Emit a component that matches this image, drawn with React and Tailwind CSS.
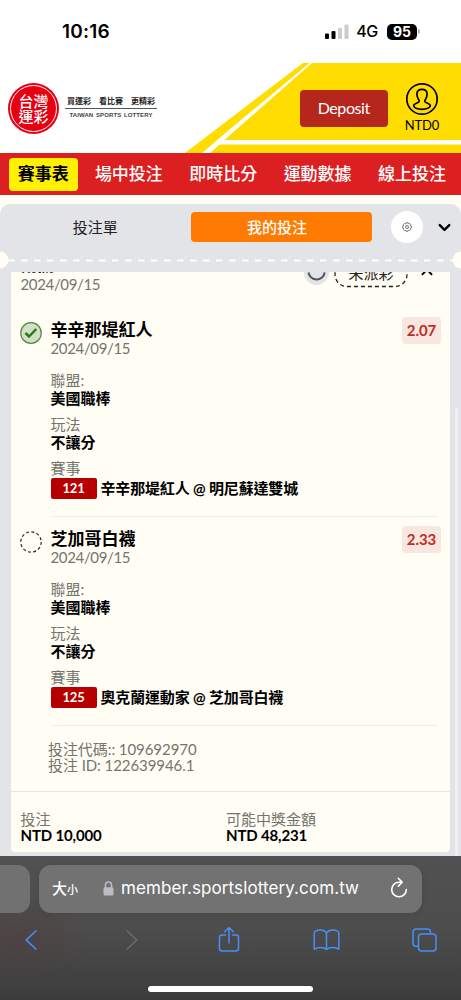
import React from 'react';
import { ChevronDown, ChevronUp } from 'lucide-react';

const NAV_ITEMS = ['賽事表', '場中投注', '即時比分', '運動數據', '線上投注'];

const BETS = [
    { team: '辛辛那堤紅人', date: '2024/09/15', odds: '2.07', league: '美國職棒', market: '不讓分', code: '121', match: '辛辛那堤紅人 @ 明尼蘇達雙城', won: true },
    { team: '芝加哥白襪', date: '2024/09/15', odds: '2.33', league: '美國職棒', market: '不讓分', code: '125', match: '奧克蘭運動家 @ 芝加哥白襪', won: false },
];

function StatusBar() {
    return (
        <div className="flex h-[63px] shrink-0 items-start justify-between bg-white pt-[21px] pr-[41px] pl-[62px] font-['Inter','Liberation_Sans',sans-serif] text-black">
            <span className="text-[19px] leading-[21px] font-semibold tracking-[0.2px]">10:16</span>
            <div className="flex h-[21px] items-center">
                <svg width="24" height="16" viewBox="0 0 24 16" className="mr-[7px]">
                    <rect x="0" y="9.5" width="4" height="5.5" rx="1" fill="#000" />
                    <rect x="6.5" y="7" width="4" height="8" rx="1" fill="#000" />
                    <rect x="13" y="4" width="4" height="11" rx="1" fill="#ccc" />
                    <rect x="19.5" y="0.5" width="4" height="14.5" rx="1" fill="#ccc" />
                </svg>
                <span className="mr-[9px] text-[16px] leading-[21px] font-medium tracking-[-0.3px]">4G</span>
                <span className="flex h-4 w-[30px] items-center justify-center rounded-[5px] bg-black text-[14px] font-bold text-white">95</span>
                <span className="ml-px h-[5px] w-[2px] rounded-r-full bg-[#b5b5b5]" />
            </div>
        </div>
    );
}

function Header() {
    return (
        <header className="relative h-[90px] shrink-0 bg-white">
            {/* Faixa amarela diagonal */}
            <svg className="absolute inset-0" width="461" height="90" viewBox="0 0 461 90">
                <polygon points="303,0 461,0 461,90 185,90" fill="#fd0" />
                <polygon points="309.5,0 312,0 230,72 210,90 202,90 229,67" fill="#fff" />
                <polygon points="224,77 461,77 461,81.5 218,81.5" fill="#fff" />
            </svg>
            <div className="relative flex h-full items-start pl-2">
                <div className="mt-5 flex size-[51px] items-center justify-center rounded-full bg-[#e60012]">
                    <div className="flex size-[47px] flex-col items-center justify-center rounded-full border border-white text-[15px] leading-[15px] font-medium text-white">
                        <span>台灣</span>
                        <span>運彩</span>
                    </div>
                </div>
                <div className="mt-[32px] ml-[6px] w-[92px] text-center">
                    <div className="flex h-[13px] justify-between px-[2px] text-[8px] leading-[12px] font-bold text-[#222]">
                        <span>買運彩</span>
                        <span>看比賽</span>
                        <span>更精彩</span>
                    </div>
                    <div className="border-t border-[#555] pt-[2px] font-['Liberation_Sans',sans-serif] text-[6px] leading-[8px] font-bold tracking-[0.1px] whitespace-nowrap text-[#444] [word-spacing:1px]">TAIWAN SPORTS LOTTERY</div>
                </div>
                <button className="mt-[26.5px] ml-auto h-[37.5px] w-[88.5px] rounded-[4px] bg-[#b5261c] text-[16px] tracking-[-0.4px] text-white">Deposit</button>
                <div className="mr-[19px] ml-[14px] flex w-[40px] flex-col items-center pt-[19px]">
                    <svg width="34" height="34" viewBox="0 0 34 34" fill="none" stroke="#000" strokeWidth="1.7">
                        <circle cx="17" cy="17" r="15.2" />
                        <path d="M17 7.3c-3.1 0-5.1 2-5.1 4.8 0 3 1 4.400 1.900 5.800.8 1.300.4 2.100-.9 2.700-2.400 1-4.200 1.600-4.200 3.200 0 2 3.600 3.500 8.300 3.500s8.300-1.500 8.300-3.500c0-1.600-1.800-2.200-4.200-3.200-1.300-.6-1.700-1.400-.9-2.700.9-1.400 1.900-2.800 1.900-5.800 0-2.800-2-4.800-5.100-4.800z" />
                    </svg>
                    <span className="text-[13px] leading-[18px] tracking-[-0.1px] whitespace-nowrap">NTD0</span>
                </div>
            </div>
        </header>
    );
}

function Nav() {
    return (
        <nav className="flex h-[42px] shrink-0 items-center justify-between bg-[#dc1f20] pr-[15px] pl-[9px] text-[17px] font-medium text-white">
            {NAV_ITEMS.map((item, i) => (
                <a key={item} className={i === 0 ? '-mr-[9px] flex h-[33px] w-[68.5px] items-center justify-center rounded-[4px] bg-[#fff100] font-bold text-black' : ''}>
                    {item}
                </a>
            ))}
        </nav>
    );
}

function GearIcon() {
    return (
        <svg width="10" height="10" viewBox="0 0 20 20" fill="none" stroke="#555" strokeWidth="1.6">
            <path d="M8 1.500h4l.8 2.300 2.200-1 2.700 2.700-1 2.200 2.300.8v3l-2.300.8 1 2.200-2.700 2.700-2.200-1-.8 2.300H8l-.8-2.300-2.200 1-2.700-2.700 1-2.200L1 11.500v-3l2.300-.8-1-2.200L5 2.800l2.200 1z" />
            <circle cx="10" cy="10" r="3" />
        </svg>
    );
}

function Tabs() {
    return (
        <div className="relative h-[68px] shrink-0 rounded-t-[10px] bg-[#e3e4e8]">
            <div className="flex items-center pt-[7px] text-[15px]">
                <span className="w-[190.5px] text-center text-[#222]">投注單</span>
                <span className="flex h-[30.5px] w-[181px] items-center justify-center rounded-[4px] bg-[#ff7a00] pr-[8px] font-medium text-white">我的投注</span>
                <span className="ml-[19.5px] flex size-8 items-center justify-center rounded-full bg-white"><GearIcon /></span>
                <ChevronDown size={19} strokeWidth={3} className="ml-[12px]" />
            </div>
            {/* Picote do bilhete */}
            <svg className="absolute top-[47px] left-0" width="461" height="18" viewBox="0 0 461 18">
                <path d="M8 9.500H453" stroke="#fffdf4" strokeWidth="2.2" strokeDasharray="6.500 6.500" />
                <circle cx="0" cy="9" r="8.5" fill="#fffdf4" />
                <circle cx="461" cy="9" r="8.5" fill="#fffdf4" />
            </svg>
        </div>
    );
}

function BetStatus({ won }) {
    return (
        <svg width="22" height="22" viewBox="0 0 22 22" fill="none" className="mt-[2px] mr-[8.500px] shrink-0">
            {won ? (
                <>
                    <circle cx="11" cy="11" r="10.300" fill="#d3dfc9" stroke="#4d8b3d" strokeWidth="1.200" />
                    <path d="M5.500 11l3.500 3.500 7.300-7.500" stroke="#2b7a16" strokeWidth="2.500" />
                </>
            ) : (
                <circle cx="11" cy="11" r="10.200" stroke="#222" strokeWidth="1.200" strokeDasharray="3 2.340" />
            )}
        </svg>
    );
}

function Field({ label, children }) {
    return (
        <div className="mb-2">
            <div className="h-[18px] leading-[18px] text-[#75756f]">{label}</div>
            <div className="h-[18px] leading-[18px] font-bold whitespace-nowrap">{children}</div>
        </div>
    );
}

function Bet({ bet }) {
    return (
        <div className="flex h-[209px] pt-[12px] pr-[12px] pl-[9px] text-[15px]">
            <BetStatus won={bet.won} />
            <div className="h-[197px] flex-1 border-b-[1.5px] border-[#efede6]">
                <div className="flex items-start">
                    <div className="flex-1">
                        <div className="h-5 text-[17px] leading-5 font-bold">{bet.team}</div>
                        <div className="h-4 text-[15px] leading-4 tracking-[-0.35px] text-[#75756f]">{bet.date}</div>
                    </div>
                    <span className="-mt-[3px] -mr-[3px] flex h-[27px] w-[39px] items-center justify-center rounded-[4px] bg-[#f8e7e0] text-[15px] font-bold tracking-[-0.1px] text-[#c12c24]">{bet.odds}</span>
                </div>
                <div className="mt-[15px]">
                    <Field label="聯盟:">{bet.league}</Field>
                    <Field label="玩法">{bet.market}</Field>
                    <div className="h-[18px] leading-[18px] text-[#75756f]">賽事</div>
                    <div className="mt-px flex h-[21px] items-center font-bold tracking-[-0.16px] whitespace-nowrap">
                        <span className="mr-[4px] flex h-[21px] w-[46px] items-center justify-center rounded-[2px] bg-[#b60000] text-[13px] text-white">{bet.code}</span>
                        {bet.match}
                    </div>
                </div>
            </div>
        </div>
    );
}

function Ticket() {
    return (
        <div className="relative h-[584px] shrink-0 overflow-hidden bg-[#e3e4e8] px-[11px]">
            <div className="h-[579.5px] overflow-hidden rounded-b-[4px] bg-[#fffdf4]">
                {/* Cabeçalho parcialmente rolado para fora da área visível */}
                <div className="-mt-[16px] flex h-[52px] items-start justify-between pr-[14px] pl-[9.5px]">
                    <div>
                        <div className="h-[20px] text-[17px] leading-[18px] font-bold">兩關</div>
                        <div className="h-[17px] text-[15px] leading-[17px] tracking-[-0.35px] text-[#75756f]">2024/09/15</div>
                    </div>
                    <div className="flex items-start">
                        <svg width="25" height="25" viewBox="0 0 25 25" fill="none" className="mt-[3.500px] mr-[5.500px]">
                            <circle cx="12.500" cy="12.500" r="12.500" fill="#e3e4e8" />
                            <path d="M4.500 12.500a8.200 8.200 0 0 0 16.200 0" stroke="#555" strokeWidth="2" />
                        </svg>
                        <svg width="74" height="30" viewBox="0 0 74 30" className="mt-[1.500px]">
                            <rect x="1" y="1" width="72" height="27.500" rx="12" fill="none" stroke="#222" strokeWidth="1.300" strokeDasharray="4 3" />
                            <text x="37" y="20.500" textAnchor="middle" fontSize="15" fill="#222">未派彩</text>
                        </svg>
                        <ChevronUp size={18} strokeWidth={2.5} className="mt-[7px] ml-[10px]" />
                    </div>
                </div>
                {BETS.map((bet) => (
                    <Bet key={bet.code} bet={bet} />
                ))}
                <div className="h-[66px] border-b-[1.5px] border-[#e8e6df] pt-[15px] pl-[37px] text-[15px] leading-4 tracking-[-0.07px] text-[#75756f]">
                    <div className="whitespace-nowrap">投注代碼:: 109692970</div>
                    <div className="whitespace-nowrap">投注 ID: 122639946.1</div>
                </div>
                <div className="grid grid-cols-[205.5px_1fr] pt-[19px] pl-[9.5px] text-[15px] leading-4">
                    <div>
                        <div className="text-[#75756f]">投注</div>
                        <div className="font-bold tracking-[-0.15px]">NTD 10,000</div>
                    </div>
                    <div>
                        <div className="text-[#75756f]">可能中獎金額</div>
                        <div className="font-bold tracking-[-0.15px]">NTD 48,231</div>
                    </div>
                </div>
            </div>
            <div className="absolute top-[136px] right-[3px] h-[460px] w-[3px] rounded-full bg-[#f0f1f3]" />
        </div>
    );
}

function BrowserBar() {
    return (
        <footer className="flex h-[144px] shrink-0 flex-col bg-[radial-gradient(ellipse_75px_48px_at_20px_80px,#5038386b,transparent),linear-gradient(#515151,#4d4d4d_50%,#3c3c3c)] font-['Inter','Liberation_Sans',sans-serif]">
            <div className="flex h-[57px] items-start pt-[8.500px]">
                <div className="h-[48.500px] w-[30px] rounded-r-[12px] bg-[#717171]" />
                <div className="ml-[9px] flex h-[48.500px] w-[383px] items-center rounded-[12px] bg-[#727272] pr-[14px] pl-[13px] text-white shadow-[0_1px_6px_#0000001a]">
                    <span className="w-[51px] font-['Noto_Sans_CJK_TC',sans-serif] text-[15px] leading-5 font-medium whitespace-nowrap">大<span className="text-[11px]">小</span></span>
                    <svg width="11" height="15" viewBox="0 0 11 15" className="mr-[7px]">
                        <path d="M2.400 7V4.200a3.100 3.100 0 0 1 6.200 0V7" fill="none" stroke="#bdbcc3" strokeWidth="1.500" />
                        <rect x="0.500" y="6.300" width="10" height="8.200" rx="1.500" fill="#bdbcc3" />
                    </svg>
                    <span className="text-[17px] tracking-[0.1px] whitespace-nowrap">member.sportslottery.com.tw</span>
                    <svg width="18" height="22" viewBox="0 0 18 22" fill="none" stroke="#fff" strokeWidth="1.600" strokeLinecap="round" strokeLinejoin="round" className="-mt-[2px] ml-auto">
                        <path d="M11.800 5.200H9A7.300 7.300 0 1 0 16.300 12.500M8.300 1.300l3.900 3.900-3.900 3.900" />
                    </svg>
                </div>
            </div>
            <div className="flex h-[54px] items-center pl-[25px] text-[#478ef7]">
                <svg width="12" height="20" viewBox="0 0 12 20" fill="none" stroke="currentColor" strokeWidth="1.700" strokeLinecap="round"><path d="M10.800 1L1.200 10l9.600 9" /></svg>
                <svg width="12" height="20" viewBox="0 0 12 20" fill="none" stroke="#6b6b6b" strokeWidth="1.500" strokeLinecap="round" className="ml-[89px]"><path d="M1.200 1l9.600 9-9.600 9" /></svg>
                <svg width="22" height="28" viewBox="0 0 22 28" fill="none" stroke="currentColor" strokeWidth="1.500" strokeLinecap="round" strokeLinejoin="round" className="ml-[79.500px]">
                    <path d="M7.500 9H4a2.500 2.500 0 0 0-2.500 2.500v11A2.500 2.500 0 0 0 4 25h14a2.500 2.500 0 0 0 2.500-2.500v-11A2.500 2.500 0 0 0 18 9h-3.500M11 17V1.500M6.700 5.800L11 1.500l4.300 4.300" />
                </svg>
                <svg width="27" height="22" viewBox="0 0 27 22" fill="none" stroke="currentColor" strokeWidth="1.500" strokeLinejoin="round" className="ml-[73.500px]">
                    <path d="M13.500 4C12 1.500 9.500 1 7.500 1 4.500 1 1.500 2.200 1.200 4v16.300c1.500-1.300 3.800-1.800 6.300-1.800 2.500 0 4.500.5 6 2 1.500-1.500 3.500-2 6-2s4.800.5 6.300 1.800V4c-.3-1.800-3.300-3-6.300-3-2 0-4.500.5-6 3zM13.500 4v16.500" />
                </svg>
                <svg width="25" height="24" viewBox="0 0 25 24" fill="none" stroke="currentColor" strokeWidth="1.500" className="ml-[72px]">
                    <rect x="6.500" y="6" width="17.500" height="17" rx="3" />
                    <path d="M6.500 18.300H4a3 3 0 0 1-3-3V4a3 3 0 0 1 3-3h11.500a3 3 0 0 1 3 3v2" />
                </svg>
            </div>
            <div className="mx-auto mt-[19px] h-[5.500px] w-[165px] rounded-full bg-white" />
        </footer>
    );
}

export default function App() {
    return (
        <div className="flex h-[1000px] w-[461px] flex-col overflow-hidden bg-[#fffdf4] font-['Lato','Noto_Sans_CJK_TC',sans-serif] text-black">
            <StatusBar />
            <Header />
            <Nav />
            <div className="h-[9px] shrink-0" />
            <Tabs />
            <Ticket />
            <BrowserBar />
        </div>
    );
}
